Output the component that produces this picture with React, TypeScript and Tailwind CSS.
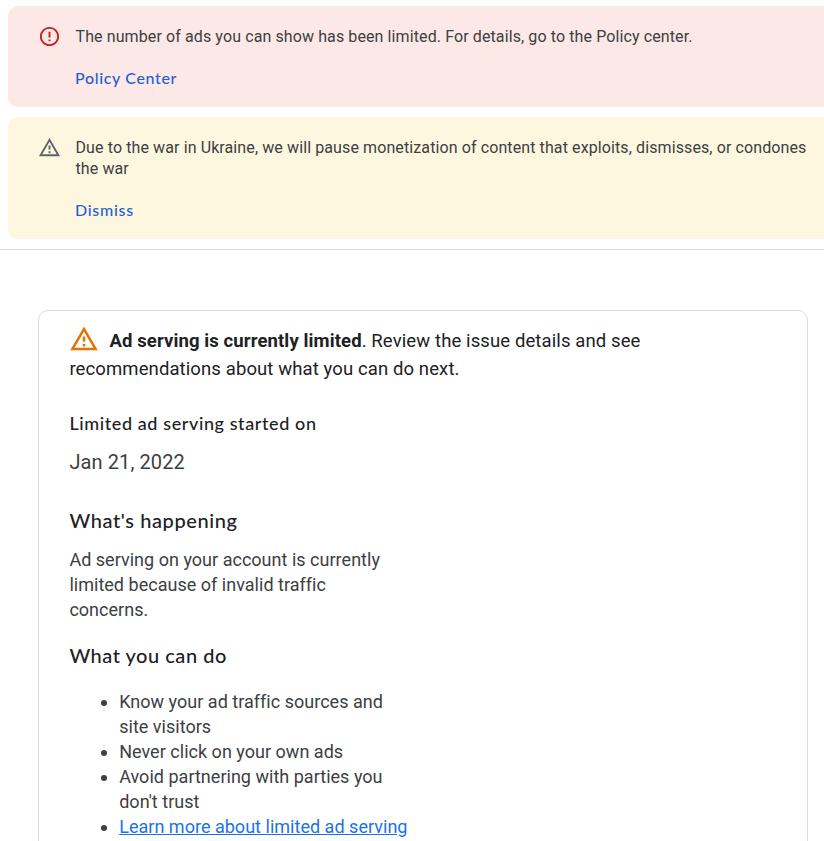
const warning = "M12 5.99L19.53 19H4.47L12 5.99M12 2L1 21h22L12 2zm1 14h-2v2h2v-2zm0-6h-2v4h2v-4z";
const error = "M11 15h2v2h-2v-2zm0-8h2v6h-2V7zm.99-5C6.47 2 2 6.48 2 12s4.47 10 9.99 10C17.52 22 22 17.52 22 12S17.52 2 11.99 2zM12 20c-4.42 0-8-3.58-8-8s3.58-8 8-8 8 3.58 8 8-3.58 8-8 8z";

function Icon({ d, className }: { d: string; className: string }) {
  return (
    <svg viewBox="0 0 24 24" className={className} fill="currentColor">
      <path d={d} />
    </svg>
  );
}

export default function App() {
  return (
    <div className="h-[841px] w-[824px] overflow-hidden bg-white font-['Roboto',sans-serif] text-[#3c4043]">
      <header className="h-[250px] border-b border-[#dadce0] pl-2 pt-1.5">
        <section className="flex h-[101px] gap-[15px] rounded-l-[10px] bg-[#fce8e6] pl-[30px] pt-5">
          <Icon d={error} className="-mt-px size-[23px] shrink-0 text-[#c5221f]" />
          <div className="-ml-[0.5px]">
            <p className="text-base leading-[21px] tracking-[0.105px] whitespace-nowrap">The number of ads you can show has been limited. For details, go to the Policy center.</p>
            <a className="mt-5 -ml-[0.5px] block font-['Lato',sans-serif] text-base leading-[21px] font-medium tracking-[0.65px] text-[#1f5fd3]">Policy Center</a>
          </div>
        </section>
        <section className="mt-2.5 flex h-[122px] gap-[15px] rounded-l-[10px] bg-[#fef7e0] pl-[30px] pt-5">
          <Icon d={warning} className="-mt-px size-[23px] shrink-0 text-[#5f6368]" />
          <div className="-ml-[0.5px]">
            <p className="text-base leading-[21px] tracking-[0.105px] whitespace-nowrap">Due to the war in Ukraine, we will pause monetization of content that exploits, dismisses, or condones<br />the war</p>
            <a className="mt-5 -ml-[0.5px] block font-['Lato',sans-serif] text-base leading-[21px] font-medium tracking-[0.7px] text-[#1f5fd3]">Dismiss</a>
          </div>
        </section>
      </header>
      <main className="mt-[60px] ml-[38px] h-[560px] w-[770px] rounded-[10px] border border-[#dadce0] pl-[30.4px] pt-4">
        <div className="text-[18.5px] leading-7 tracking-[0.11px] text-[#202124]">
          <div className="flex h-7 items-center whitespace-nowrap">
            <Icon d={warning} className="-mt-1 mr-[10.5px] -ml-[0.5px] size-[30px] text-[#e37400]" />
            <span><b className="font-bold">Ad serving is currently limited</b>. Review the issue details and see</span>
          </div>
          <div>recommendations about what you can do next.</div>
        </div>
        <h2 className="mt-7 font-['Lato',sans-serif] text-lg leading-6 font-medium tracking-[0.6px] text-[#202124]">Limited ad serving started on</h2>
        <p className="mt-[13px] text-xl leading-7 tracking-[0.1px]">Jan 21, 2022</p>
        <h2 className="mt-[30px] font-['Lato',sans-serif] text-xl leading-7 font-medium tracking-[0.6px] text-[#202124]">What's happening</h2>
        <p className="mt-[13px] text-lg leading-[25px] tracking-[0.02px]">Ad serving on your account is currently<br />limited because of invalid traffic<br />concerns.</p>
        <h2 className="mt-[19px] font-['Lato',sans-serif] text-xl leading-7 font-medium tracking-[0.52px] text-[#202124]">What you can do</h2>
        <ul className="mt-5 list-disc pl-[49.8px] text-lg leading-[25px] tracking-[0.02px] whitespace-nowrap">
          <li>Know your ad traffic sources and<br />site visitors</li>
          <li>Never click on your own ads</li>
          <li>Avoid partnering with parties you<br />don't trust</li>
          <li><a className="text-[#1a73e8] underline">Learn more about limited ad serving</a></li>
        </ul>
      </main>
    </div>
  );
}
